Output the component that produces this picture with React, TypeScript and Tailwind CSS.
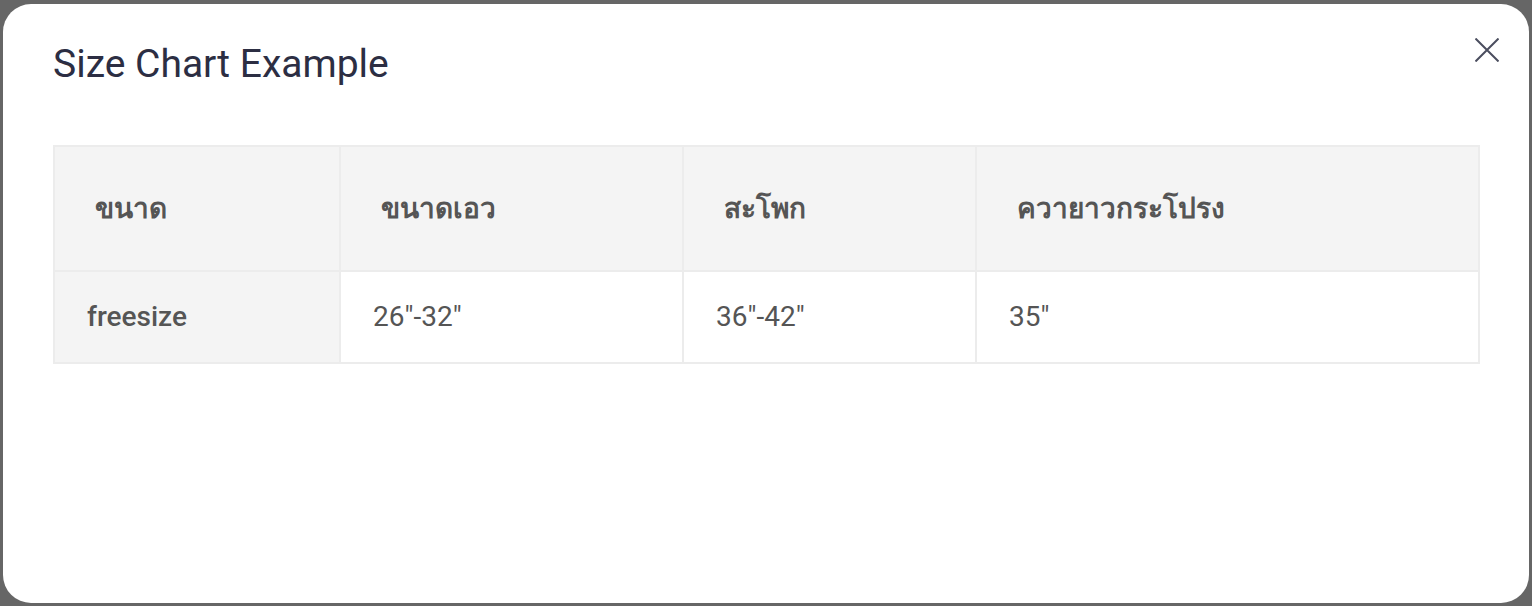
import React from "react";

const headers = ["ขนาด", "ขนาดเอว", "สะโพก", "ควายาวกระโปรง"];
const row = ["freesize", "26\"-32\"", "36\"-42\"", "35\""];
const widths = ["w-[286px]", "w-[343px]", "w-[293px]", "w-[503px]"];

export default function App() {
  return (
    <div
      className="w-[1532px] h-[606px] bg-[#666666] pt-[4px] pl-[3px] pr-[3px] pb-[3px] overflow-hidden"
      style={{ fontFamily: "Roboto, 'Noto Sans', sans-serif" }}
    >
      <div className="relative h-full w-full bg-white rounded-[28px] pt-[38px] px-[50px]">
        <h2 className="text-[39px] leading-[44px] text-[#2c2e43] font-normal">Size Chart Example</h2>
        <button className="absolute right-[26px] top-[30px] w-[32px] h-[32px] flex items-center justify-center">
          <svg width="24" height="24" viewBox="0 0 24 24" fill="none">
            <path d="M0.5 0.5L23.5 23.5M23.5 0.5L0.5 23.5" stroke="#4b4e5f" strokeWidth="2" />
          </svg>
        </button>
        <table className="mt-[59px] border-collapse w-[1425px] table-fixed">
          <thead>
            <tr className="h-[125px] bg-[#f4f4f4]">
              {headers.map((h, i) => (
                <th
                  key={i}
                  className={`${widths[i]} border-2 border-[#ececec] text-left pl-[40px] text-[28px] font-bold text-[#555555] align-middle`}
                >
                  {h}
                </th>
              ))}
            </tr>
          </thead>
          <tbody>
            <tr className="h-[92px]">
              {row.map((c, i) => (
                <td
                  key={i}
                  className={`border-2 border-[#ececec] pl-[32px] text-[28px] text-[#555555] align-middle ${
                    i === 0 ? "bg-[#f4f4f4] font-medium" : "bg-white font-normal"
                  }`}
                >
                  {c}
                </td>
              ))}
            </tr>
          </tbody>
        </table>
      </div>
    </div>
  );
}
